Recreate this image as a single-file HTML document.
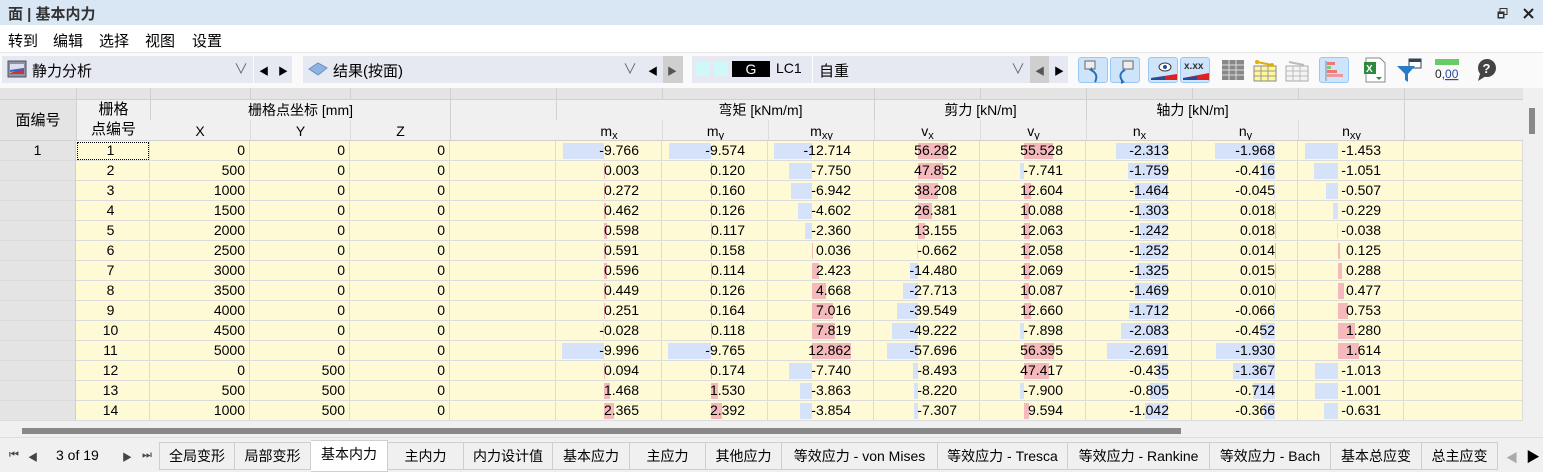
<!DOCTYPE html>
<html><head><meta charset="utf-8">
<style>
*{margin:0;padding:0;box-sizing:border-box}
body{width:1543px;height:472px;overflow:hidden;background:#f0f0f0;font-family:"Liberation Sans","Noto Sans CJK SC",sans-serif;font-size:14px;color:#000;position:relative}
.a{position:absolute}
#title{left:0;top:0;width:1543px;height:25px;background:#d9e6f4}
#menu{left:0;top:25px;width:1543px;height:27px;background:#fff}
#menu span{position:absolute;top:5px;font-size:15px}
#tb{left:0;top:52px;width:1543px;height:36px;background:#fafafa;border-top:1px solid #e6e6e6}
.combo{background:#e6e8f2;height:27px;top:56px}
.nav{background:#e6e8f2;height:27px;top:56px}
.hdr{background:#f0f0f0}
.row{position:absolute;left:0;width:1523px;height:20px;display:flex}
.c{height:20px;border-right:1px solid #dcdcdc;border-bottom:1px solid #dcdcdc;background:#fffad6;text-align:right;padding-right:4px;line-height:19px;position:relative;white-space:nowrap}
.c0{background:#e4e4e4;text-align:center;padding:0;border-right:1px solid #cfcfcf}
.num{text-align:right;padding-right:22px}
.c span{position:relative;z-index:1}
.bar{position:absolute;top:2px;height:16px}
.tab{position:absolute;top:442px;height:28px;border:1px solid #cfcfcf;border-left:none;background:#f0f0f0;text-align:center;line-height:27px;font-size:14px}
.ic{position:absolute;top:57px;width:26px;height:26px}
.sel{background:#cde4fb;border:1px solid #99c8f2;border-radius:3px}
.sb{font-size:11px;position:relative;top:3px}
.vl{position:absolute;top:88px;width:1px;height:12px;background:#d0d0d0}
</style></head><body>
<div id="title" class="a"><span class="a" style="left:8px;top:3px;font-size:15px;color:#333;font-weight:bold">面 | 基本内力</span>
<svg class="a" style="left:1497px;top:8px" width="11" height="11"><rect x="3" y="0.5" width="7" height="6" fill="none" stroke="#333"/><rect x="0.5" y="3.5" width="7" height="7" fill="#333"/><rect x="2" y="6" width="4" height="3" fill="#d9e6f4"/></svg>
<svg class="a" style="left:1523px;top:8px" width="11" height="11"><path d="M1 1L10 10M10 1L1 10" stroke="#222" stroke-width="2"/></svg>
</div>
<div id="menu" class="a"><span style="left:8px">转到</span><span style="left:53px">编辑</span><span style="left:99px">选择</span><span style="left:145px">视图</span><span style="left:192px">设置</span></div>
<div id="tb" class="a"></div>
<div class="a combo" style="left:2px;width:251px"><svg class="a" style="left:5px;top:4px" width="20" height="18"><rect x="1" y="1" width="18" height="16" fill="#8894a8" stroke="#555"/><rect x="3" y="4" width="14" height="10" fill="#dde"/><path d="M3 13L17 8V14H3Z" fill="#c33"/><path d="M3 11L17 9" stroke="#36c" stroke-width="2"/></svg><span class="a" style="left:30px;top:4px;font-size:15px">静力分析</span><span class="a" style="left:232px;top:3px;color:#666">∨</span></div>
<div class="a nav" style="left:254px;width:38px;font-size:10px"><span class="a" style="left:5px;top:7px">◀</span><span class="a" style="left:24px;top:7px">▶</span></div>
<div class="a combo" style="left:303px;width:340px"><svg class="a" style="left:5px;top:6px" width="20" height="14"><path d="M1 7L10 1L19 6L10 13Z" fill="#8fb3e0" stroke="#6a8fc0"/></svg><span class="a" style="left:30px;top:4px;font-size:15px">结果(按面)</span><span class="a" style="left:320px;top:3px;color:#666">∨</span></div>
<div class="a nav" style="left:643px;width:40px;font-size:10px"><span class="a" style="left:5px;top:7px">◀</span><span class="a" style="left:20px;top:0;width:20px;height:27px;background:#cfcfcf"></span><span class="a" style="left:24px;top:7px;color:#555">▶</span></div>
<div class="a combo" style="left:692px;width:120px"><span class="a" style="left:4px;top:6px;width:14px;height:14px;background:#cff8fb"></span><span class="a" style="left:22px;top:6px;width:14px;height:14px;background:#cff8fb"></span><span class="a" style="left:40px;top:5px;width:38px;height:16px;background:#000;color:#fff;text-align:center;line-height:16px">G</span><span class="a" style="left:84px;top:4px">LC1</span></div>
<div class="a combo" style="left:812px;width:218px;border-left:1px solid #fff"><span class="a" style="left:6px;top:4px;font-size:15px">自重</span><span class="a" style="left:198px;top:3px;color:#666">∨</span></div>
<div class="a nav" style="left:1030px;width:38px;font-size:10px"><span class="a" style="left:0;top:0;width:19px;height:27px;background:#cfcfcf"></span><span class="a" style="left:5px;top:7px;color:#555">◀</span><span class="a" style="left:24px;top:7px">▶</span></div>
<!-- icons -->
<div class="ic sel" style="left:1078px;width:30px"><svg width="28" height="26"><rect x="6" y="3" width="10" height="8" fill="#eee" stroke="#666"/><path d="M12 12Q20 16 16 24" stroke="#2a6fb5" stroke-width="2" fill="none"/><path d="M10 12L13 9L14 14Z" fill="#2a6fb5"/></svg></div>
<div class="ic sel" style="left:1110px;width:30px"><svg width="28" height="26"><rect x="12" y="3" width="10" height="8" fill="#eee" stroke="#666"/><path d="M14 12Q6 16 12 24" stroke="#2a6fb5" stroke-width="2" fill="none"/><path d="M10 22L14 24L10 26Z" fill="#2a6fb5"/></svg></div>
<div class="ic sel" style="left:1148px;width:30px"><svg width="28" height="26"><ellipse cx="16" cy="9" rx="6" ry="4" fill="#fff" stroke="#333"/><circle cx="16" cy="9" r="2" fill="#2a4a9a"/><path d="M2 20L28 16V22H2Z" fill="#d22"/><path d="M2 20L16 18V22H2Z" fill="#2a4a9a"/></svg></div>
<div class="ic sel" style="left:1180px;width:30px"><svg width="28" height="26"><text x="3" y="11" font-size="10" font-weight="bold" font-family="Liberation Sans" fill="#333">x.xx</text><path d="M2 20L28 15V22H2Z" fill="#d22"/><path d="M2 20L16 18V22H2Z" fill="#2a4a9a"/></svg></div>
<svg class="a" style="left:1221px;top:58px" width="26" height="24"><rect x="1" y="2" width="22" height="20" fill="#888"/><path d="M1 7H23M1 12H23M1 17H23M8 2V22M15 2V22" stroke="#ddd"/></svg>
<svg class="a" style="left:1252px;top:58px" width="26" height="24"><rect x="2" y="8" width="22" height="15" fill="#fff79a" stroke="#888"/><path d="M2 13H24M2 18H24M9 8V23M16 8V23" stroke="#999"/><path d="M5 4L20 7" stroke="#e0b000" stroke-width="2"/><circle cx="5" cy="4" r="2" fill="#e0b000"/><circle cx="20" cy="7" r="2" fill="#e0b000"/></svg>
<svg class="a" style="left:1284px;top:58px" width="26" height="24"><rect x="2" y="8" width="22" height="15" fill="#f4f4f4" stroke="#aaa"/><path d="M2 13H24M2 18H24M9 8V23M16 8V23" stroke="#bbb"/><path d="M5 4L20 7" stroke="#bbb" stroke-width="2"/></svg>
<div class="ic sel" style="left:1319px;width:30px"><svg width="28" height="26"><path d="M6 3V23" stroke="#888"/><rect x="7" y="4" width="8" height="3" fill="#e77"/><rect x="7" y="8" width="4" height="3" fill="#7c7"/><rect x="7" y="12" width="10" height="3" fill="#e77"/><rect x="7" y="16" width="16" height="3" fill="#e99"/></svg></div>
<svg class="a" style="left:1362px;top:56px" width="26" height="28"><path d="M4 2H18L23 7V26H4Z" fill="#fff" stroke="#888"/><rect x="2" y="6" width="12" height="12" fill="#2e8b3e"/><text x="4" y="16" font-size="10" fill="#fff" font-family="Liberation Sans" font-weight="bold">X</text><path d="M14 21L17 24L20 21Z" fill="#2e8b3e"/></svg>
<svg class="a" style="left:1396px;top:57px" width="28" height="26"><rect x="13" y="2" width="12" height="9" fill="#fff" stroke="#345"/><rect x="13" y="2" width="12" height="3" fill="#345"/><path d="M1 9H19L12 17V25L9 23V17Z" fill="#2a7cc8"/></svg>
<svg class="a" style="left:1433px;top:58px" width="28" height="24"><rect x="2" y="1" width="24" height="6" fill="#6c6"/><text x="2" y="20" font-size="12" font-family="Liberation Sans" fill="#222">0,<tspan fill="#2a4a9a" text-decoration="underline">00</tspan></text></svg>
<svg class="a" style="left:1475px;top:58px" width="24" height="24"><circle cx="12" cy="10" r="9" fill="#444"/><path d="M5 16L3 23L11 18Z" fill="#444"/><text x="7.5" y="15" font-size="13" font-weight="bold" fill="#fff" font-family="Liberation Sans">?</text></svg>

<!-- header -->
<div class="a hdr" style="left:0;top:88px;width:1523px;height:53px"></div>
<div class="a" style="left:0;top:88px;width:1523px;height:12px;background:#e4e4e4;border-bottom:1px solid #d0d0d0"></div>
<div class="vl" style="left:76px"></div><div class="vl" style="left:150px"></div><div class="vl" style="left:250px"></div><div class="vl" style="left:350px"></div><div class="vl" style="left:450px"></div><div class="vl" style="left:556px"></div><div class="vl" style="left:662px"></div><div class="vl" style="left:874px"></div><div class="vl" style="left:980px"></div><div class="vl" style="left:1086px"></div><div class="vl" style="left:1192px"></div><div class="vl" style="left:1298px"></div><div class="vl" style="left:1404px"></div>
<div class="a" style="left:0;top:100px;width:76px;height:41px;background:#e4e4e4;text-align:center;line-height:41px;font-size:15px">面编号</div>
<div class="a" style="left:76px;top:100px;width:74px;height:41px;text-align:center;line-height:20px;border-left:1px solid #d0d0d0;font-size:15px">栅格<br>点编号</div>
<div class="a" style="left:150px;top:100px;width:300px;text-align:center;line-height:20px;border-left:1px solid #d0d0d0">栅格点坐标 [mm]</div>
<div class="a" style="left:556px;top:100px;width:318px;text-align:center;line-height:20px;border-left:1px solid #d0d0d0;padding-left:90px">弯矩 [kNm/m]</div>
<div class="a" style="left:874px;top:100px;width:212px;text-align:center;line-height:20px;border-left:1px solid #d0d0d0">剪力 [kN/m]</div>
<div class="a" style="left:1086px;top:100px;width:318px;text-align:center;line-height:20px;border-left:1px solid #d0d0d0;padding-right:106px">轴力 [kN/m]</div>
<div class="a" style="left:450px;top:100px;width:1px;height:41px;background:#d0d0d0"></div>
<div class="a" style="left:1404px;top:100px;width:1px;height:41px;background:#d0d0d0"></div>
<div class="a" style="left:150px;top:120px;line-height:22px;display:flex">
<div style="width:100px;text-align:center">X</div><div style="width:100px;text-align:center;border-left:1px solid #ddd">Y</div><div style="width:100px;text-align:center;border-left:1px solid #ddd">Z</div></div>
<div class="a" style="left:556px;top:120px;line-height:22px;display:flex">
<div style="width:106px;text-align:center">m<span class="sb">x</span></div>
<div style="width:106px;text-align:center;border-left:1px solid #ddd">m<span class="sb">y</span></div>
<div style="width:106px;text-align:center;border-left:1px solid #ddd">m<span class="sb">xy</span></div>
<div style="width:106px;text-align:center;border-left:1px solid #ddd">v<span class="sb">x</span></div>
<div style="width:106px;text-align:center;border-left:1px solid #ddd">v<span class="sb">y</span></div>
<div style="width:106px;text-align:center;border-left:1px solid #ddd">n<span class="sb">x</span></div>
<div style="width:106px;text-align:center;border-left:1px solid #ddd">n<span class="sb">y</span></div>
<div style="width:106px;text-align:center;border-left:1px solid #ddd">n<span class="sb">xy</span></div></div>
<div class="a" style="left:0;top:140px;width:1523px;height:1px;background:#d0d0d0"></div>

<div id="grid">
<div class="row" style="top:141px"><div class="c c0" style="width:76px">1</div><div class="c" style="width:74px;text-align:center;outline:1px dotted #000;outline-offset:-2px">1</div><div class="c" style="width:100px">0</div><div class="c" style="width:100px">0</div><div class="c" style="width:100px">0</div><div class="c" style="width:106px"></div><div class="c num" style="width:106px">-9.766</div><div class="c num" style="width:106px">-9.574</div><div class="c num" style="width:106px">-12.714</div><div class="c num" style="width:106px">56.282</div><div class="c num" style="width:106px">55.528</div><div class="c num" style="width:106px">-2.313</div><div class="c num" style="width:106px">-1.968</div><div class="c num" style="width:106px">-1.453</div><div class="c" style="width:119px"></div></div>
<div class="row" style="top:161px"><div class="c c0" style="width:76px"></div><div class="c" style="width:74px;text-align:center">2</div><div class="c" style="width:100px">500</div><div class="c" style="width:100px">0</div><div class="c" style="width:100px">0</div><div class="c" style="width:106px"></div><div class="c num" style="width:106px">0.003</div><div class="c num" style="width:106px">0.120</div><div class="c num" style="width:106px">-7.750</div><div class="c num" style="width:106px">47.852</div><div class="c num" style="width:106px">-7.741</div><div class="c num" style="width:106px">-1.759</div><div class="c num" style="width:106px">-0.416</div><div class="c num" style="width:106px">-1.051</div><div class="c" style="width:119px"></div></div>
<div class="row" style="top:181px"><div class="c c0" style="width:76px"></div><div class="c" style="width:74px;text-align:center">3</div><div class="c" style="width:100px">1000</div><div class="c" style="width:100px">0</div><div class="c" style="width:100px">0</div><div class="c" style="width:106px"></div><div class="c num" style="width:106px">0.272</div><div class="c num" style="width:106px">0.160</div><div class="c num" style="width:106px">-6.942</div><div class="c num" style="width:106px">38.208</div><div class="c num" style="width:106px">12.604</div><div class="c num" style="width:106px">-1.464</div><div class="c num" style="width:106px">-0.045</div><div class="c num" style="width:106px">-0.507</div><div class="c" style="width:119px"></div></div>
<div class="row" style="top:201px"><div class="c c0" style="width:76px"></div><div class="c" style="width:74px;text-align:center">4</div><div class="c" style="width:100px">1500</div><div class="c" style="width:100px">0</div><div class="c" style="width:100px">0</div><div class="c" style="width:106px"></div><div class="c num" style="width:106px">0.462</div><div class="c num" style="width:106px">0.126</div><div class="c num" style="width:106px">-4.602</div><div class="c num" style="width:106px">26.381</div><div class="c num" style="width:106px">10.088</div><div class="c num" style="width:106px">-1.303</div><div class="c num" style="width:106px">0.018</div><div class="c num" style="width:106px">-0.229</div><div class="c" style="width:119px"></div></div>
<div class="row" style="top:221px"><div class="c c0" style="width:76px"></div><div class="c" style="width:74px;text-align:center">5</div><div class="c" style="width:100px">2000</div><div class="c" style="width:100px">0</div><div class="c" style="width:100px">0</div><div class="c" style="width:106px"></div><div class="c num" style="width:106px">0.598</div><div class="c num" style="width:106px">0.117</div><div class="c num" style="width:106px">-2.360</div><div class="c num" style="width:106px">13.155</div><div class="c num" style="width:106px">12.063</div><div class="c num" style="width:106px">-1.242</div><div class="c num" style="width:106px">0.018</div><div class="c num" style="width:106px">-0.038</div><div class="c" style="width:119px"></div></div>
<div class="row" style="top:241px"><div class="c c0" style="width:76px"></div><div class="c" style="width:74px;text-align:center">6</div><div class="c" style="width:100px">2500</div><div class="c" style="width:100px">0</div><div class="c" style="width:100px">0</div><div class="c" style="width:106px"></div><div class="c num" style="width:106px">0.591</div><div class="c num" style="width:106px">0.158</div><div class="c num" style="width:106px">0.036</div><div class="c num" style="width:106px">-0.662</div><div class="c num" style="width:106px">12.058</div><div class="c num" style="width:106px">-1.252</div><div class="c num" style="width:106px">0.014</div><div class="c num" style="width:106px">0.125</div><div class="c" style="width:119px"></div></div>
<div class="row" style="top:261px"><div class="c c0" style="width:76px"></div><div class="c" style="width:74px;text-align:center">7</div><div class="c" style="width:100px">3000</div><div class="c" style="width:100px">0</div><div class="c" style="width:100px">0</div><div class="c" style="width:106px"></div><div class="c num" style="width:106px">0.596</div><div class="c num" style="width:106px">0.114</div><div class="c num" style="width:106px">2.423</div><div class="c num" style="width:106px">-14.480</div><div class="c num" style="width:106px">12.069</div><div class="c num" style="width:106px">-1.325</div><div class="c num" style="width:106px">0.015</div><div class="c num" style="width:106px">0.288</div><div class="c" style="width:119px"></div></div>
<div class="row" style="top:281px"><div class="c c0" style="width:76px"></div><div class="c" style="width:74px;text-align:center">8</div><div class="c" style="width:100px">3500</div><div class="c" style="width:100px">0</div><div class="c" style="width:100px">0</div><div class="c" style="width:106px"></div><div class="c num" style="width:106px">0.449</div><div class="c num" style="width:106px">0.126</div><div class="c num" style="width:106px">4.668</div><div class="c num" style="width:106px">-27.713</div><div class="c num" style="width:106px">10.087</div><div class="c num" style="width:106px">-1.469</div><div class="c num" style="width:106px">0.010</div><div class="c num" style="width:106px">0.477</div><div class="c" style="width:119px"></div></div>
<div class="row" style="top:301px"><div class="c c0" style="width:76px"></div><div class="c" style="width:74px;text-align:center">9</div><div class="c" style="width:100px">4000</div><div class="c" style="width:100px">0</div><div class="c" style="width:100px">0</div><div class="c" style="width:106px"></div><div class="c num" style="width:106px">0.251</div><div class="c num" style="width:106px">0.164</div><div class="c num" style="width:106px">7.016</div><div class="c num" style="width:106px">-39.549</div><div class="c num" style="width:106px">12.660</div><div class="c num" style="width:106px">-1.712</div><div class="c num" style="width:106px">-0.066</div><div class="c num" style="width:106px">0.753</div><div class="c" style="width:119px"></div></div>
<div class="row" style="top:321px"><div class="c c0" style="width:76px"></div><div class="c" style="width:74px;text-align:center">10</div><div class="c" style="width:100px">4500</div><div class="c" style="width:100px">0</div><div class="c" style="width:100px">0</div><div class="c" style="width:106px"></div><div class="c num" style="width:106px">-0.028</div><div class="c num" style="width:106px">0.118</div><div class="c num" style="width:106px">7.819</div><div class="c num" style="width:106px">-49.222</div><div class="c num" style="width:106px">-7.898</div><div class="c num" style="width:106px">-2.083</div><div class="c num" style="width:106px">-0.452</div><div class="c num" style="width:106px">1.280</div><div class="c" style="width:119px"></div></div>
<div class="row" style="top:341px"><div class="c c0" style="width:76px"></div><div class="c" style="width:74px;text-align:center">11</div><div class="c" style="width:100px">5000</div><div class="c" style="width:100px">0</div><div class="c" style="width:100px">0</div><div class="c" style="width:106px"></div><div class="c num" style="width:106px">-9.996</div><div class="c num" style="width:106px">-9.765</div><div class="c num" style="width:106px">12.862</div><div class="c num" style="width:106px">-57.696</div><div class="c num" style="width:106px">56.395</div><div class="c num" style="width:106px">-2.691</div><div class="c num" style="width:106px">-1.930</div><div class="c num" style="width:106px">1.614</div><div class="c" style="width:119px"></div></div>
<div class="row" style="top:361px"><div class="c c0" style="width:76px"></div><div class="c" style="width:74px;text-align:center">12</div><div class="c" style="width:100px">0</div><div class="c" style="width:100px">500</div><div class="c" style="width:100px">0</div><div class="c" style="width:106px"></div><div class="c num" style="width:106px">0.094</div><div class="c num" style="width:106px">0.174</div><div class="c num" style="width:106px">-7.740</div><div class="c num" style="width:106px">-8.493</div><div class="c num" style="width:106px">47.417</div><div class="c num" style="width:106px">-0.435</div><div class="c num" style="width:106px">-1.367</div><div class="c num" style="width:106px">-1.013</div><div class="c" style="width:119px"></div></div>
<div class="row" style="top:381px"><div class="c c0" style="width:76px"></div><div class="c" style="width:74px;text-align:center">13</div><div class="c" style="width:100px">500</div><div class="c" style="width:100px">500</div><div class="c" style="width:100px">0</div><div class="c" style="width:106px"></div><div class="c num" style="width:106px">1.468</div><div class="c num" style="width:106px">1.530</div><div class="c num" style="width:106px">-3.863</div><div class="c num" style="width:106px">-8.220</div><div class="c num" style="width:106px">-7.900</div><div class="c num" style="width:106px">-0.805</div><div class="c num" style="width:106px">-0.714</div><div class="c num" style="width:106px">-1.001</div><div class="c" style="width:119px"></div></div>
<div class="row" style="top:401px"><div class="c c0" style="width:76px"></div><div class="c" style="width:74px;text-align:center">14</div><div class="c" style="width:100px">1000</div><div class="c" style="width:100px">500</div><div class="c" style="width:100px">0</div><div class="c" style="width:106px"></div><div class="c num" style="width:106px">2.365</div><div class="c num" style="width:106px">2.392</div><div class="c num" style="width:106px">-3.854</div><div class="c num" style="width:106px">-7.307</div><div class="c num" style="width:106px">9.594</div><div class="c num" style="width:106px">-1.042</div><div class="c num" style="width:106px">-0.366</div><div class="c num" style="width:106px">-0.631</div><div class="c" style="width:119px"></div></div>
</div>

<!-- vertical scrollbar -->
<div class="a" style="left:1523px;top:88px;width:20px;height:335px;background:#f0f0f0"></div>
<div class="a" style="left:1529px;top:108px;width:6px;height:26px;background:#888"></div>
<!-- horizontal scrollbar -->
<div class="a" style="left:0;top:421px;width:1543px;height:16px;background:#f0f0f0"></div>
<div class="a" style="left:22px;top:428px;width:1159px;height:6px;background:#888"></div>
<div class="a" style="left:0;top:437px;width:1543px;height:35px;background:#f0f0f0;border-top:1px solid #ddd"></div>
<div class="a" style="left:9px;top:449px;font-size:11px;color:#444">⏮</div>
<div class="a" style="left:28px;top:449px;font-size:10px;color:#444">◀</div>
<div class="a" style="left:56px;top:447px">3 of 19</div>
<div class="a" style="left:122px;top:449px;font-size:10px;color:#444">▶</div>
<div class="a" style="left:142px;top:449px;font-size:11px;color:#444">⏭</div>
<div class="tab" style="left:159px;width:76px;border-left:1px solid #cfcfcf">全局变形</div>
<div class="tab" style="left:235px;width:76px">局部变形</div>
<div class="tab" style="left:311px;width:77px;background:#fff;top:440px;height:32px">基本内力</div>
<div class="tab" style="left:388px;width:76px">主内力</div>
<div class="tab" style="left:464px;width:89px">内力设计值</div>
<div class="tab" style="left:553px;width:77px">基本应力</div>
<div class="tab" style="left:630px;width:76px">主应力</div>
<div class="tab" style="left:706px;width:76px">其他应力</div>
<div class="tab" style="left:782px;width:156px">等效应力 - von Mises</div>
<div class="tab" style="left:938px;width:130px">等效应力 - Tresca</div>
<div class="tab" style="left:1068px;width:142px">等效应力 - Rankine</div>
<div class="tab" style="left:1210px;width:121px">等效应力 - Bach</div>
<div class="tab" style="left:1331px;width:91px">基本总应变</div>
<div class="tab" style="left:1422px;width:76px">总主应变</div>
<div class="a" style="left:1506px;top:449px;font-size:12px;color:#aaa">◀</div>
<div class="a" style="left:1526px;top:447px;font-size:14px;color:#000">▶</div>

<script>
var ax=[604,711,812,918,1024,1168,1275,1338];
var scn=[4.2,4.4,3.0,0.53,0.53,22.5,30.5,22.7];
var scp=[4.2,4.4,3.0,0.53,0.53,22.5,30.5,13];
var starts=[556,662,768,874,980,1086,1192,1298];
document.querySelectorAll('#grid .row').forEach(function(r){
 var cells=r.querySelectorAll('.num');
 cells.forEach(function(c,i){
  var v=parseFloat(c.textContent);var t=c.textContent;
  c.innerHTML='<span>'+t+'</span>';
  var w=Math.max(1,Math.abs(v)*(v<0?scn[i]:scp[i]));var a=ax[i]-starts[i];
  var b=document.createElement('div');b.className='bar';
  b.style.background=v<0?'#d6e2fa':'#f5b9bb';
  b.style.width=w+'px';b.style.left=(v<0?a-w:a)+'px';
  c.insertBefore(b,c.firstChild);
 });
});
</script>
</body></html>
